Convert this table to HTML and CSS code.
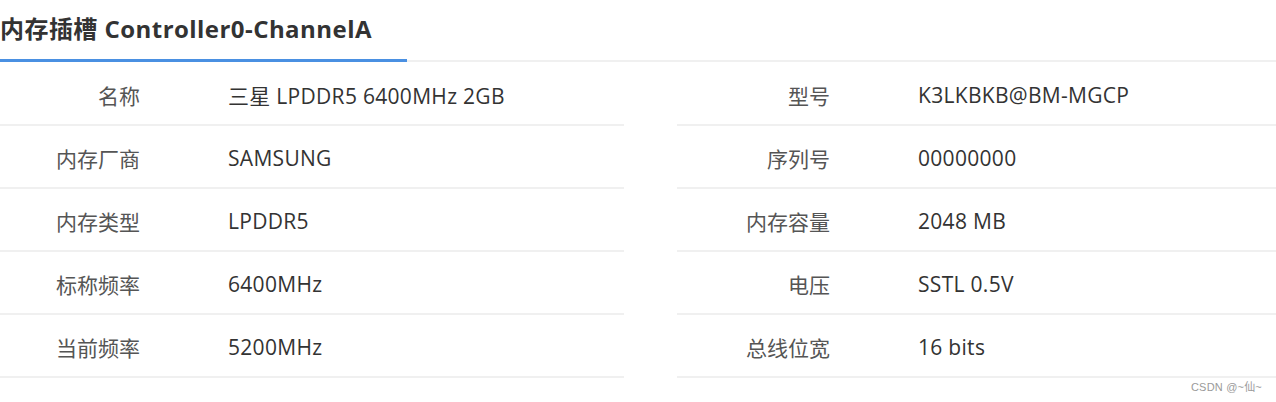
FILE: index.html
```html
<!DOCTYPE html>
<html lang="zh-CN">
<head>
<meta charset="utf-8">
<title>内存插槽</title>
<link rel="stylesheet" href="styles.css">
</head>
<body>
<div class="page">
  <div class="header">
    <h2 class="title">内存插槽 Controller0-ChannelA</h2>
  </div>
  <div class="tables">
    <div class="table table-left">
      <div class="row"><div class="label">名称</div><div class="value">三星 LPDDR5 6400MHz 2GB</div></div>
      <div class="row"><div class="label">内存厂商</div><div class="value">SAMSUNG</div></div>
      <div class="row"><div class="label">内存类型</div><div class="value">LPDDR5</div></div>
      <div class="row"><div class="label">标称频率</div><div class="value">6400MHz</div></div>
      <div class="row"><div class="label">当前频率</div><div class="value">5200MHz</div></div>
    </div>
    <div class="table table-right">
      <div class="row"><div class="label">型号</div><div class="value">K3LKBKB@BM-MGCP</div></div>
      <div class="row"><div class="label">序列号</div><div class="value">00000000</div></div>
      <div class="row"><div class="label">内存容量</div><div class="value">2048 MB</div></div>
      <div class="row"><div class="label">电压</div><div class="value">SSTL 0.5V</div></div>
      <div class="row"><div class="label">总线位宽</div><div class="value">16 bits</div></div>
    </div>
  </div>
  <div class="watermark">CSDN @~仙~</div>
</div>
</body>
</html>
```

FILE: styles.css
```css
html, body {
  margin: 0;
  padding: 0;
  background: #ffffff;
}

body {
  font-family: "Open Sans", "Noto Sans CJK SC", sans-serif;
  color: #333333;
}

.page {
  position: relative;
  width: 1276px;
  height: 402px;
  overflow: hidden;
}

.header {
  display: flex;
  align-items: flex-end;
  height: 60px;
  border-bottom: 2px solid #f0f0f0;
}

.title {
  margin: 0 0 -2px 0;
  box-sizing: border-box;
  width: 407px;
  padding: 0 0 13px 0;
  font-size: 24px;
  line-height: 34px;
  font-weight: 700;
  letter-spacing: 0.45px;
  color: #333333;
  border-bottom: 3px solid #4a90e2;
  white-space: nowrap;
}

.tables {
  display: grid;
  grid-template-columns: 624px 1fr;
  column-gap: 53px;
  margin-top: 1px;
}

.row {
  display: flex;
  align-items: center;
  height: 59px;
  padding-top: 2px;
  border-bottom: 2px solid #f0f0f0;
  font-size: 21px;
  letter-spacing: 0.3px;
}

.label {
  flex: none;
  text-align: right;
  color: #555555;
  white-space: nowrap;
  letter-spacing: 0;
}

.table-left .label {
  width: 140px;
}

.table-right .label {
  width: 153px;
}

.value {
  padding-left: 88px;
  color: #333333;
  white-space: nowrap;
}

.watermark {
  position: absolute;
  right: 14px;
  bottom: 8px;
  font-family: "Liberation Sans", "Noto Sans CJK SC", sans-serif;
  font-size: 11px;
  letter-spacing: 0.2px;
  color: #9a9a9a;
}
```
